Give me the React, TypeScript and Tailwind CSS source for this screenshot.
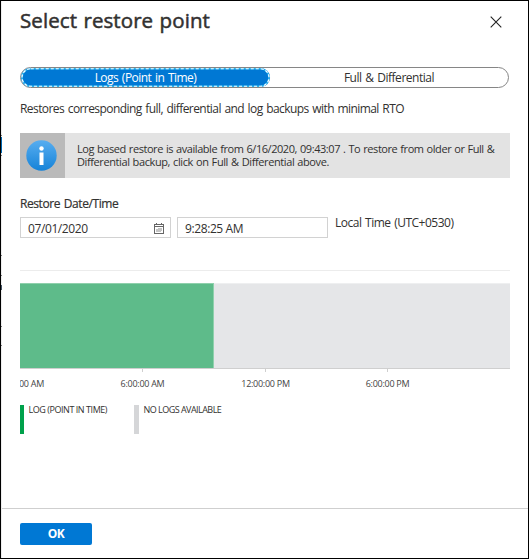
const hours = [
  { label: "6:00:00 AM", left: "left-[122px]" },
  { label: "12:00:00 PM", left: "left-[245px]" },
  { label: "6:00:00 PM", left: "left-[367px]" },
];

function InfoIcon() {
  return (
    <svg width="31" height="31" viewBox="0 0 31 31">
      <defs>
        <linearGradient id="info" x1="0" y1="0" x2="0" y2="1">
          <stop offset="0" stopColor="#57adf0" />
          <stop offset="1" stopColor="#1683d8" />
        </linearGradient>
      </defs>
      <circle cx="15.5" cy="15.5" r="15.2" fill="url(#info)" />
      <circle cx="15.5" cy="8.5" r="2.2" fill="#fff" />
      <rect x="13.5" y="12.5" width="4" height="12.5" fill="#fff" />
    </svg>
  );
}

function CalendarIcon() {
  return (
    <svg width="10" height="11" viewBox="0 0 10 11" shapeRendering="crispEdges" fill="none">
      <path d="M.5 1.5h9v9h-9z" stroke="#666" />
      <path d="M1 3.5h8" stroke="#666" />
      <path d="M2.5 0v2M7.5 0v2" stroke="#666" />
      <path d="M4 5.5h4M2 6.5h6M2 7.5h6M2 8.5h5" stroke="#c4c4c4" />
    </svg>
  );
}

export default function App() {
  return (
    <div className="relative flex h-[559px] w-[529px] flex-col border border-black bg-white font-['Open_Sans','Noto_Sans',sans-serif] text-xs text-[#323130]">
      {/* Sliver of the page behind the panel */}
      <div className="absolute top-0 left-0 h-full w-px bg-[#eeeeee]">
        <i className="absolute top-[134px] h-px w-px bg-[#777]" />
        <i className="absolute top-[136px] h-4 w-px bg-[#0067b0]" />
        <i className="absolute top-[154px] h-px w-px bg-[#777]" />
        <i className="absolute top-[254px] h-px w-px bg-[#777]" />
        <i className="absolute top-[274px] h-px w-px bg-[#777]" />
        <i className="absolute top-[284px] h-[5px] w-px bg-[#456]" />
        <i className="absolute top-[325px] h-px w-px bg-[#777]" />
        <i className="absolute top-[344px] h-px w-px bg-[#777]" />
      </div>

      <main className="flex h-[507px] shrink-0 flex-col pr-[18px] pl-[19px]">
        <header className="flex h-[66px] items-start justify-between pr-[8px]">
          <h1 className="mt-[5px] text-[20.5px] leading-[28px] tracking-[0.08px] whitespace-nowrap [-webkit-text-stroke:0.5px_#323130] [word-spacing:1px]">
            Select restore point
          </h1>
          <svg className="mt-[15px]" width="12" height="12" viewBox="0 0 12 12">
            <path d="M.7.7l10.6 10.6M11.3.7L.7 11.3" stroke="#222" strokeWidth="1.1" />
          </svg>
        </header>

        <div className="flex h-[21px] w-[489px] shrink-0 rounded-full border border-[#868686] text-center leading-[17px] whitespace-nowrap [word-spacing:1px]">
          <div className="relative h-[19px] w-[249px] rounded-full bg-[#0078d4] pt-px tracking-[-0.52px] text-white">
            <svg className="absolute inset-0" width="249" height="19" fill="none">
              <rect x="1" y=".75" width="247" height="17.5" rx="8.75" stroke="#25b4f0" strokeWidth="1.5" />
              <rect x="1" y=".75" width="247" height="17.5" rx="8.75" stroke="#fff" strokeWidth="1.2" strokeDasharray="3 2" />
            </svg>
            Logs (Point in Time)
          </div>
          <div className="flex-1 pt-px tracking-[-0.47px]">Full &amp; Differential</div>
        </div>

        <p className="mt-[12px] h-[18px] leading-[18px] tracking-[-0.57px] whitespace-nowrap [word-spacing:1px]">
          Restores corresponding full, differential and log backups with minimal RTO
        </p>

        <section className="mt-[15px] flex h-[45px] w-[490px] shrink-0 bg-[#e3e3e3]">
          <div className="flex w-[45px] items-center justify-center bg-[#bababa] pr-[3px] pb-px">
            <InfoIcon />
          </div>
          <p className="pt-[9px] pl-[12px] text-[11px] leading-[13px] tracking-[-0.44px] whitespace-nowrap [word-spacing:0.6px]">
            Log based restore is available from 6/16/2020, 09:43:07 . To restore from older or Full &amp;
            <br />
            <span className="tracking-[-0.4px]">Differential backup, click on Full &amp; Differential above.</span>
          </p>
        </section>

        <h2 className="mt-[17px] h-[18px] leading-[18px] tracking-[-0.42px] whitespace-nowrap [-webkit-text-stroke:0.2px_#323130] [word-spacing:1px]">
          Restore Date/Time
        </h2>

        <div className="mt-[4px] flex h-[21px] leading-[21px] tracking-[-0.4px] whitespace-nowrap">
          <div className="flex w-[151px] items-center justify-between border border-[#d2d2d2] pt-px pr-[6px] pl-[7px]">
            07/01/2020
            <CalendarIcon />
          </div>
          <div className="ml-[6px] flex w-[151px] items-center border border-[#d2d2d2] pt-px pl-[7px]">9:28:25 AM</div>
          <span className="-mt-[5px] ml-[7px] tracking-[-0.5px] [word-spacing:1px]">Local Time (UTC+0530)</span>
        </div>

        <hr className="mt-[32px] w-[490px] border-[#ececec]" />

        <div className="mt-[12px] flex h-[86px] w-[490px] shrink-0 border-b border-[#cfcfcf]">
          <div className="w-[194px] border-t border-r border-[#8fd0ac] bg-[#5ebb8a]" />
          <div className="flex-1 border-t border-[#eeeff0] bg-[#e5e6e8]" />
        </div>
        <div className="relative h-[36px] w-[490px] overflow-hidden text-[9px] leading-3 tracking-[-0.27px] whitespace-nowrap text-[#444]">
          <span className="absolute top-[9px] right-[466px]">12:00:00 AM</span>
          {hours.map((hour) => (
            <div key={hour.label} className={`absolute top-0 flex w-px flex-col items-center ${hour.left}`}>
              <i className="h-[3px] w-px bg-[#cfcfcf]" />
              <span className="mt-[6px]">{hour.label}</span>
            </div>
          ))}
        </div>

        <div className="flex h-[29px] text-[9px] leading-[10px] whitespace-nowrap">
          <div className="w-[114px] border-l-4 border-[#00a14b] pl-[4.5px] tracking-[-0.45px]">LOG (POINT IN TIME)</div>
          <div className="border-l-[5px] border-[#d5d6d8] pl-[4.5px] tracking-[-0.53px]">NO LOGS AVAILABLE</div>
        </div>
      </main>

      <footer className="flex-1 border-t border-[#cfcfcf] pt-[14px] pl-[19px]">
        <button className="block h-[22px] w-[72px] rounded-[2px] bg-[#0078d4] pb-px text-center leading-[21px] font-bold tracking-[-0.4px] text-white">
          OK
        </button>
      </footer>
    </div>
  );
}
